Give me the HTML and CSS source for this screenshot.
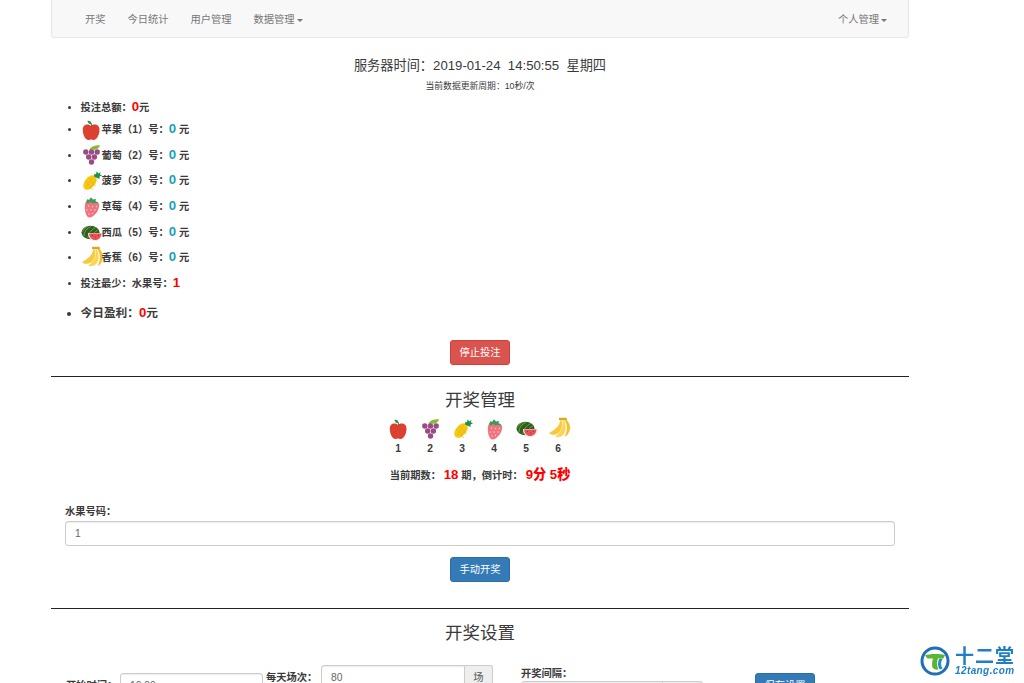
FILE: index.html
```html
<!DOCTYPE html>
<html lang="en">
  <head>
    <meta charset="UTF-8" />
    <title>开奖管理</title>
    <link rel="stylesheet" href="styles.css">
  </head>
  <body>
    <!-- Fruit icons, reused in the list and the draw row -->
    <svg class="sprites" width="0" height="0">
      <symbol id="apple" viewBox="0 0 21 21" overflow="visible">
        <path d="M10 6C7 3.500 1.800 4 1.800 10 1.800 15 4.500 20 7.500 20c1 0 1.500-.5 2.500-.5s1.500.5 2.500.5c3 0 6-5 6-10 0-6-5.500-6.500-8.500-4z" fill="#dc4030"/>
        <path d="M10.500 4.500C8 4.200 6.500 2.500 6.500.8 9 .3 10.800 1.800 10.500 4.500z" fill="#1f9a4b"/>
        <path d="M10.200 6.500V3.500h.8v3z" fill="#7a4a22"/>
      </symbol>
      <symbol id="grape" viewBox="0 0 21 21" overflow="visible">
        <path d="M8.500 5C9 2 13 .2 19 .2c-.5 2-2 4-5 4.500-2 .3-3.500 0-5.500.3z" fill="#8ab833"/>
        <g fill="#9a4a84">
          <circle cx="4.800" cy="7" r="2.700"/><circle cx="10.500" cy="7" r="2.700"/><circle cx="16.200" cy="7" r="2.700"/>
          <circle cx="7.700" cy="12" r="2.700"/><circle cx="13.400" cy="12" r="2.700"/>
          <circle cx="10.500" cy="17" r="2.700"/>
        </g>
      </symbol>
      <symbol id="pineapple" viewBox="0 0 21 21" overflow="visible">
        <ellipse cx="9" cy="11.500" rx="5.200" ry="8.500" transform="rotate(40 9 11.500)" fill="#f7c815"/>
        <path d="M4 10l8 9M7 6.500l7.500 8.500M5 17l7-11M8 18.500l6.500-10" stroke="#e6ab0f" stroke-width=".6" fill="none"/>
        <path d="M13 5.500 13.500 2.500 15 3.500 15.500.5 17.500 2.500 19.500 1 19 3.500 21 4.500 18.500 5.500 18.500 8z" fill="#16924a"/>
      </symbol>
      <symbol id="strawberry" viewBox="0 0 21 21" overflow="visible">
        <path d="M5 5C9 2 17 4 18.200 8 18.500 13 13 20.500 8.500 20.500 5 20.500 3.800 14 3.800 10 3.800 8 4 6 5 5z" fill="#ef7480"/>
        <path d="M5 5 6.500 2 8 3 10 .3 12 2.500 15 2 14.500 4 18.500 6.500 14 6 11.500 6.500 9.500 5 6.500 6.500z" fill="#3e9a58"/>
        <g fill="#fbd4cf">
          <circle cx="7.500" cy="9" r=".7"/><circle cx="11.500" cy="9.500" r=".7"/><circle cx="15.500" cy="9.500" r=".7"/>
          <circle cx="6" cy="13" r=".7"/><circle cx="10" cy="13" r=".7"/><circle cx="14" cy="13" r=".7"/>
          <circle cx="8" cy="17" r=".7"/><circle cx="11.500" cy="16.500" r=".7"/>
        </g>
      </symbol>
      <symbol id="watermelon" viewBox="0 0 21 21" overflow="visible">
        <ellipse cx="9.500" cy="9.500" rx="9" ry="6.700" fill="#2c5f22"/>
        <path d="M3 13C3 8.500 6 5 10 3.500M7 15c0-4 3-8 7.500-10.500M1.500 8.500C3 6 5 4 7 3.200M11 15c.5-3 2-6 6-8" stroke="#8fb548" stroke-width=".8" fill="none"/>
        <path d="M7 10h14.500c0 4.500-3.200 8-7.300 8S7 14.500 7 10z" fill="#fbe7d8"/>
        <path d="M8 10.500h12.500c-.3 3.800-3 6.500-6.300 6.500S8.300 14.300 8 10.500z" fill="#e8505b"/>
        <g fill="#7a2a30"><circle cx="11.500" cy="12.500" r=".5"/><circle cx="14.500" cy="14" r=".5"/><circle cx="17.500" cy="12.500" r=".5"/></g>
      </symbol>
      <symbol id="banana" viewBox="0 0 21 21" overflow="visible">
        <path d="M12 1C12 7 6 11 .8 14 3 17 9 17 13 12 15 9 15 4 14 1z" fill="#f6c93f" stroke="#fff" stroke-width=".4"/>
        <path d="M14 1C16 8 12 14 7 17.500 10 19.500 15 18 17 13.500 18.500 9 17.500 4 16 1z" fill="#fbd550" stroke="#fff" stroke-width=".4"/>
        <path d="M16 1C20 6 19 14 16 18 20 17.500 22.500 12 22.300 8 22 5 20.500 2.500 18.500 .5z" fill="#f3c030" stroke="#fff" stroke-width=".4"/>
        <path d="M11 -1.300h7.500l.5 2.300h-8z" fill="#d9a622"/>
      </symbol>
    </svg>

    <div class="container">
      <!-- Navbar -->
      <nav class="navbar">
        <ul class="nav">
          <li><a href="#">开奖</a></li>
          <li><a href="#">今日统计</a></li>
          <li><a href="#">用户管理</a></li>
          <li><a href="#">数据管理<span class="caret"></span></a></li>
        </ul>
        <ul class="nav">
          <li><a href="#">个人管理<span class="caret"></span></a></li>
        </ul>
      </nav>

      <!-- Server time -->
      <h4 class="server-time">服务器时间：2019-01-24&nbsp; 14:50:55&nbsp; 星期四</h4>
      <p class="refresh-note">当前数据更新周期：10秒/次</p>

      <!-- Bet summary -->
      <ul class="stats">
        <li class="stat-total">投注总额：<b class="big red">0</b>元</li>
        <li class="stat-fruit"><svg class="fruit"><use href="#apple"/></svg>苹果（1）号：<b class="big teal">0</b> 元</li>
        <li class="stat-fruit"><svg class="fruit"><use href="#grape"/></svg>葡萄（2）号：<b class="big teal">0</b> 元</li>
        <li class="stat-fruit"><svg class="fruit"><use href="#pineapple"/></svg>菠萝（3）号：<b class="big teal">0</b> 元</li>
        <li class="stat-fruit"><svg class="fruit"><use href="#strawberry"/></svg>草莓（4）号：<b class="big teal">0</b> 元</li>
        <li class="stat-fruit"><svg class="fruit"><use href="#watermelon"/></svg>西瓜（5）号：<b class="big teal">0</b> 元</li>
        <li class="stat-fruit"><svg class="fruit"><use href="#banana"/></svg>香蕉（6）号：<b class="big teal">0</b> 元</li>
        <li class="stat-least">投注最少：水果号：<b class="big red">1</b></li>
        <li class="stat-profit">今日盈利：<b class="big red">0</b>元</li>
      </ul>
      <div class="actions stop-action"><button class="btn btn-danger">停止投注</button></div>
      <hr />

      <!-- Draw management -->
      <h3 class="section-title">开奖管理</h3>
      <div class="fruit-row">
        <div class="fruit-cell"><svg class="fruit"><use href="#apple"/></svg><span>1</span></div>
        <div class="fruit-cell"><svg class="fruit"><use href="#grape"/></svg><span>2</span></div>
        <div class="fruit-cell"><svg class="fruit"><use href="#pineapple"/></svg><span>3</span></div>
        <div class="fruit-cell"><svg class="fruit"><use href="#strawberry"/></svg><span>4</span></div>
        <div class="fruit-cell"><svg class="fruit"><use href="#watermelon"/></svg><span>5</span></div>
        <div class="fruit-cell"><svg class="fruit"><use href="#banana"/></svg><span>6</span></div>
      </div>
      <p class="countdown">当前期数： <b class="big red">18</b> 期，倒计时： <b class="big red">9分 5秒</b></p>
      <div class="draw-form">
        <label>水果号码：</label>
        <input class="form-control" type="text" value="1" />
      </div>
      <div class="actions"><button class="btn btn-primary">手动开奖</button></div>
      <hr class="draw-end" />

      <!-- Draw settings -->
      <h3 class="section-title settings-title">开奖设置</h3>
      <div class="settings">
        <div class="field field-start">
          <label>开始时间：</label>
          <input class="form-control" type="text" value="10:00" />
        </div>
        <div class="field field-count">
          <label>每天场次：</label>
          <div class="input-group">
            <input class="form-control" type="text" value="80" />
            <span class="addon">场</span>
          </div>
        </div>
        <div class="field-gap">
          <label>开奖间隔：</label>
          <div class="input-group">
            <input class="form-control" type="text" value="10" />
            <span class="addon addon-wide">分钟</span>
          </div>
        </div>
        <button class="btn btn-primary save-btn">保存设置</button>
      </div>
    </div>

    <!-- Site watermark -->
    <div class="watermark">
      <svg class="wm-icon" viewBox="0 0 30 30">
        <circle cx="15" cy="15" r="13" fill="#fff" stroke="#1f6fb8" stroke-width="3"/>
        <path d="M5 9.500C9 7.500 19 7.500 25 9l-1.500 3.500H18c-1.500 3-1.500 7 .5 11-3 .5-5-.5-6-2-.8-3-.5-6 .5-9H7.500z" fill="#5bb531"/>
        <path d="M19 13c1.500-.5 3-.5 3.500 0-1.800 3-2 6.500 0 9.500-1.500 1-2.500 1-3.500 0-1.500-3-1-7 0-9.500z" fill="#1f8fc0"/>
      </svg>
      <div class="wm-text">
        <span class="wm-name">十二堂</span>
        <span class="wm-url">12tang.com</span>
      </div>
    </div>
  </body>
</html>
```

FILE: styles.css
```css
/* Reset & Base */
* {
  box-sizing: border-box;
}
html,
body {
  height: 683px;
  margin: 0;
  overflow: hidden;
  background: #fff;
}
body {
  font-family: "Liberation Sans", "Noto Sans CJK SC", sans-serif;
  font-size: 10.25px;
  line-height: 15px;
  color: #3a3a3a;
}
.sprites {
  position: absolute;
}
.container {
  width: 858px;
  margin-left: 51px;
  margin-top: -14px;
}
.red {
  color: #f00;
}
.teal {
  color: #17a2b8;
}
b.big {
  font-size: 13.2px;
}

/* Navbar */
.navbar {
  display: flex;
  justify-content: space-between;
  height: 52px;
  padding: 0 10px 0 22px;
  background: #f8f8f8;
  border: 1px solid #e7e7e7;
  border-radius: 3px;
}
.nav {
  display: flex;
  margin: 0;
  padding: 0;
  list-style: none;
}
.nav a {
  display: block;
  padding: 25px 11px 0;
  color: #777;
  text-decoration: none;
}
.caret {
  display: inline-block;
  margin-left: 2px;
  vertical-align: middle;
  border-top: 3px solid #777;
  border-left: 3px solid transparent;
  border-right: 3px solid transparent;
}

/* Server time */
.server-time {
  margin: 19px 0 0;
  font-size: 13.2px;
  font-weight: 400;
  line-height: 18px;
  text-align: center;
}
.refresh-note {
  margin: 5px 0 0;
  font-size: 8.8px;
  line-height: 12px;
  text-align: center;
}

/* Bet summary */
.stats {
  margin: 5px 0 0;
  padding-left: 29.500px;
  font-weight: 700;
}
.stat-total {
  height: 19px;
  line-height: 20px;
}
.stat-fruit {
  height: 25.7px;
  line-height: 25.7px;
}
.stat-least {
  height: 27.4px;
  line-height: 25.6px;
}
.stat-profit {
  height: 30px;
  font-size: 11.7px;
  line-height: 30px;
}
.fruit {
  width: 21px;
  height: 21px;
  overflow: visible;
  vertical-align: middle;
}

/* Buttons */
.actions {
  display: flex;
  justify-content: center;
  margin-top: 11px;
}
.stop-action {
  margin-top: 12px;
}
.btn {
  width: 60px;
  height: 25px;
  padding: 0;
  font: inherit;
  color: #fff;
  border: 1px solid transparent;
  border-radius: 3px;
  cursor: pointer;
}
.btn-danger {
  background: #d9534f;
  border-color: #d43f3a;
}
.btn-primary {
  background: #337ab7;
  border-color: #2e6da4;
}
hr {
  margin: 11px 0 0;
  border: 0;
  border-top: 1px solid #222;
}
hr.draw-end {
  margin-top: 26px;
}

/* Draw management */
.section-title {
  margin: 11px 0 0;
  font-size: 17.5px;
  font-weight: 400;
  line-height: 24px;
  text-align: center;
}
.settings-title {
  margin-top: 12px;
}
.fruit-row {
  display: flex;
  justify-content: center;
  gap: 11px;
  margin-top: 7px;
  padding-right: 4px;
}
.fruit-cell {
  display: flex;
  flex-direction: column;
  align-items: center;
  gap: 2px;
  width: 21px;
  font-weight: 700;
  line-height: 13px;
}
.countdown {
  margin: 11px 0 0;
  font-weight: 700;
  line-height: 18px;
  text-align: center;
}
.draw-form {
  margin: 19px 14px 0;
}
.draw-form label {
  display: block;
  margin-bottom: 2px;
  font-weight: 700;
  line-height: 15px;
}
.form-control {
  display: block;
  width: 100%;
  height: 25px;
  padding: 0 9px;
  font: inherit;
  color: #666;
  background: #fff;
  border: 1px solid #ccc;
  border-radius: 3px;
  box-shadow: inset 0 1px 1px rgba(0, 0, 0, 0.075);
}

/* Draw settings */
.settings {
  display: flex;
  align-items: flex-start;
  margin-top: 20px;
  padding-left: 15px;
}
.settings label {
  font-weight: 700;
  white-space: nowrap;
}
.field {
  display: flex;
  align-items: center;
}
.field-start {
  width: 200px;
  margin-top: 8px;
}
.field-start label {
  width: 54px;
  flex: none;
}
.field-start .form-control {
  width: 143px;
}
.field-count {
  width: 255px;
}
.field-count label {
  width: 55px;
  flex: none;
}
.input-group {
  display: flex;
}
.input-group .form-control {
  border-radius: 3px 0 0 3px;
}
.addon {
  flex: none;
  width: 28px;
  line-height: 23px;
  color: #555;
  text-align: center;
  background: #eee;
  border: 1px solid #ccc;
  border-left: 0;
  border-radius: 0 3px 3px 0;
}
.addon-wide {
  width: 40px;
}
.field-count .input-group {
  width: 172px;
}
.field-gap {
  width: 234px;
  margin-top: 1px;
}
.field-gap label {
  display: block;
  margin-bottom: 0;
  line-height: 15px;
}
.field-gap .input-group {
  width: 182px;
}
.save-btn {
  margin-top: 8px;
}

/* Watermark */
.watermark {
  position: fixed;
  left: 920px;
  top: 645px;
  display: flex;
  gap: 5px;
  align-items: center;
}
.wm-icon {
  width: 30px;
  height: 30px;
}
.wm-text {
  display: flex;
  flex-direction: column;
}
.wm-name {
  padding-top: 3px;
  font-size: 19px;
  font-weight: 700;
  line-height: 18px;
  letter-spacing: 1px;
  color: #1f7fc4;
}
.wm-url {
  font-size: 10px;
  font-weight: 700;
  font-style: italic;
  line-height: 10px;
  letter-spacing: 0.4px;
  color: #1f7fc4;
}
```
